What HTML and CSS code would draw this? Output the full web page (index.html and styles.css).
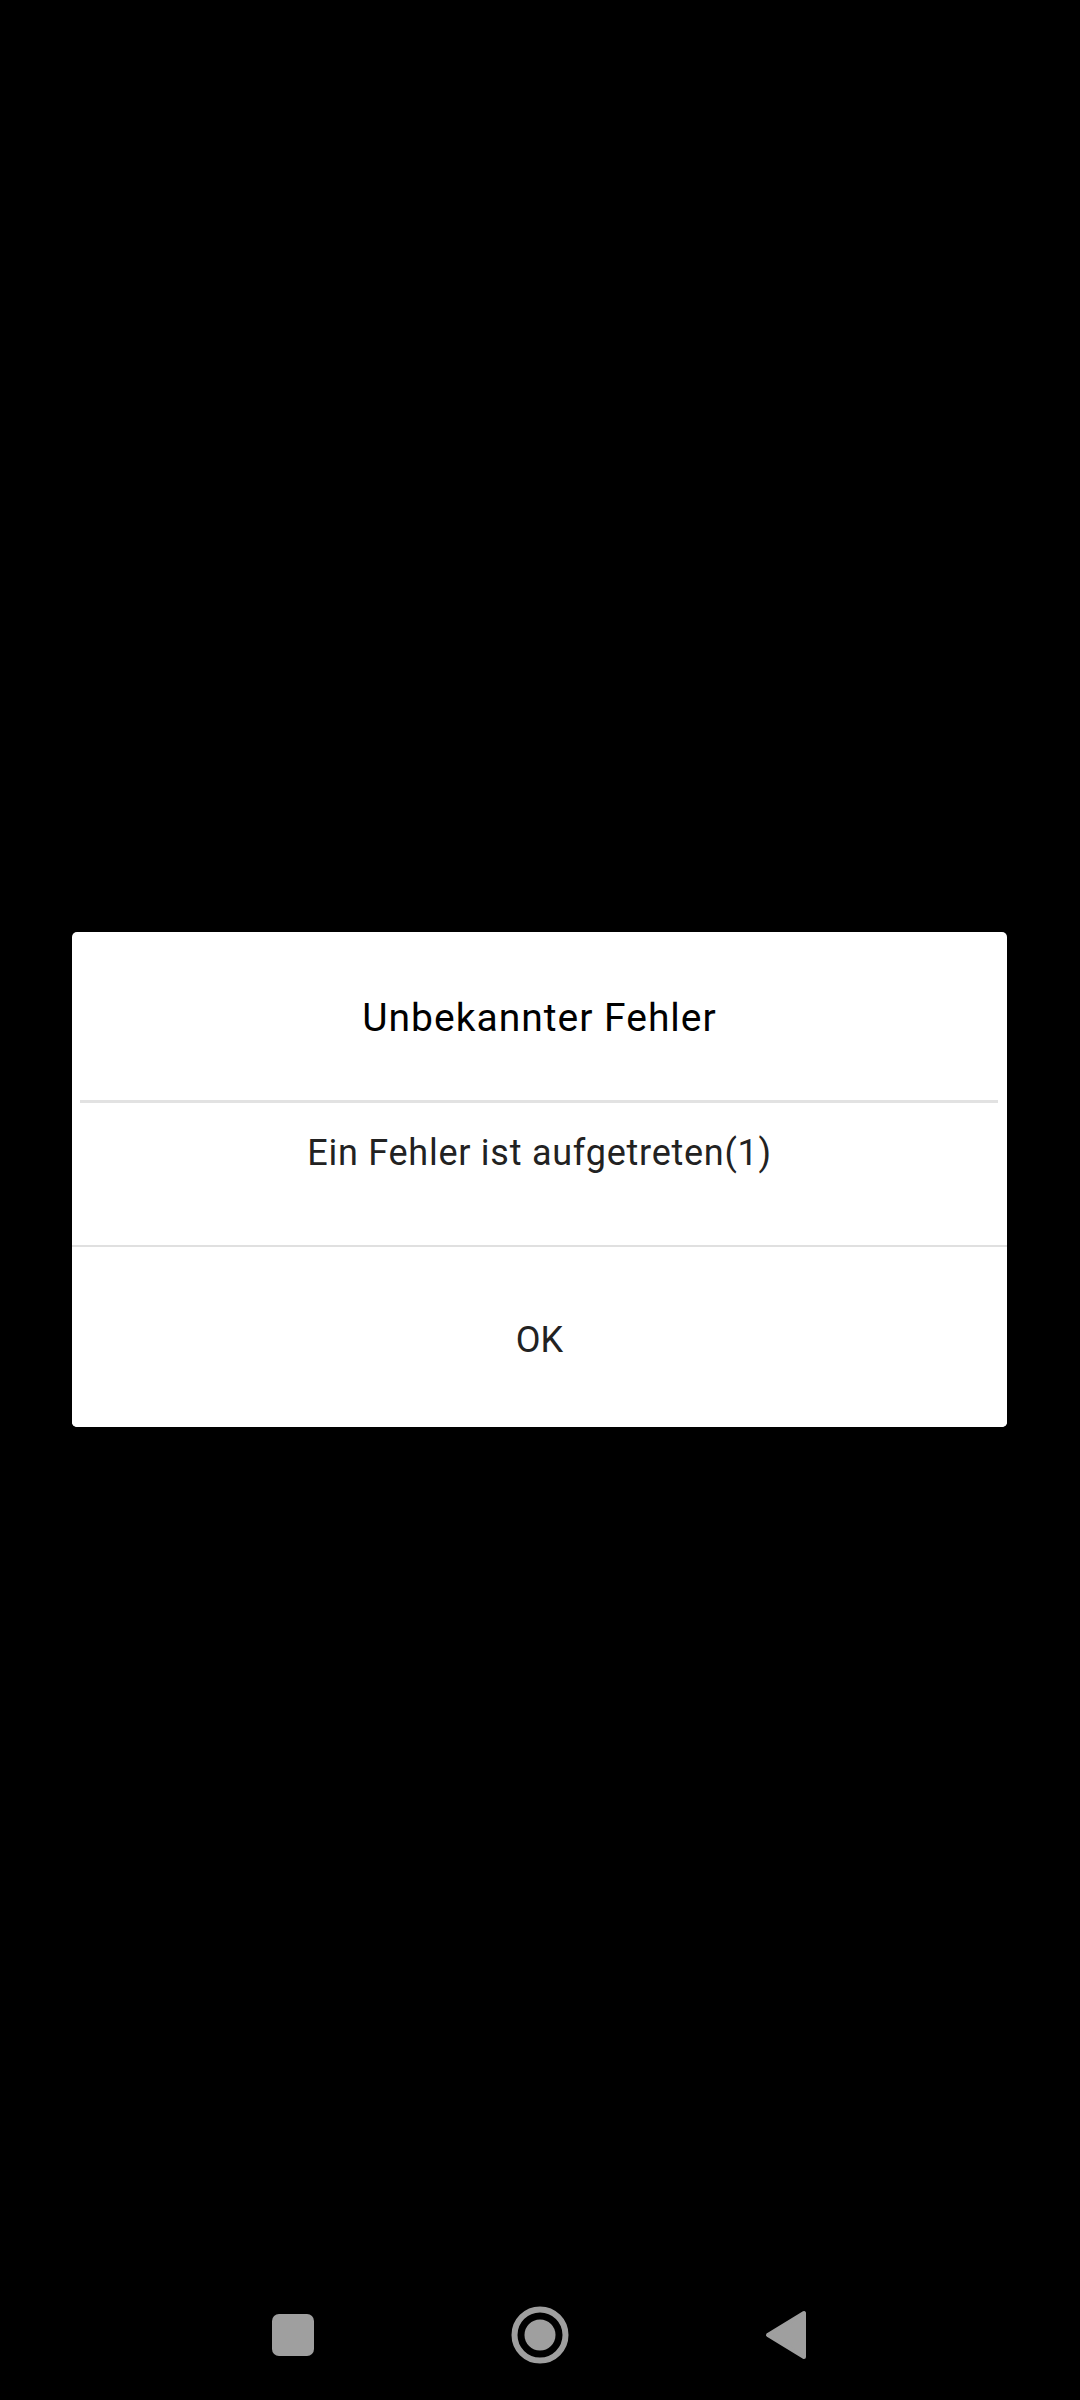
FILE: index.html
```html
<!DOCTYPE html>
<html lang="de">
<head>
<meta charset="utf-8">
<title>Unbekannter Fehler</title>
<link rel="stylesheet" href="styles.css">
</head>
<body>
<div class="screen">
  <main class="stage">
    <div class="dialog" role="alertdialog">
      <div class="dialog-title">Unbekannter Fehler</div>
      <div class="divider-inset"></div>
      <div class="dialog-message">Ein Fehler ist aufgetreten(1)</div>
      <div class="divider-full"></div>
      <button class="dialog-button" type="button">OK</button>
    </div>
  </main>
  <nav class="navbar">
    <div class="nav-slot">
      <svg width="60" height="60" viewBox="0 0 60 60"><rect x="9" y="9" width="42" height="42" rx="7" fill="#9f9f9f"/></svg>
    </div>
    <div class="nav-slot">
      <svg width="60" height="60" viewBox="0 0 60 60"><circle cx="30" cy="30" r="25.5" fill="none" stroke="#9f9f9f" stroke-width="6"/><circle cx="30" cy="30" r="15.5" fill="#9f9f9f"/></svg>
    </div>
    <div class="nav-slot">
      <svg width="60" height="60" viewBox="0 0 60 60"><polygon points="11,30 47,8 47,52" fill="#9f9f9f" stroke="#9f9f9f" stroke-width="4" stroke-linejoin="round"/></svg>
    </div>
  </nav>
</div>
</body>
</html>
```

FILE: styles.css
```css
html, body {
  margin: 0;
  padding: 0;
  background: #000;
}

.screen {
  width: 1080px;
  height: 2400px;
  display: flex;
  flex-direction: column;
  font-family: Roboto, "Noto Sans", "Liberation Sans", sans-serif;
}

.stage {
  flex: 1;
  padding: 932px 73px 0 72px;
}

.dialog {
  background: #fff;
  border-radius: 5px;
  display: flex;
  flex-direction: column;
  overflow: hidden;
}

.dialog-title {
  font-size: 39px;
  line-height: 42px;
  letter-spacing: 1px;
  color: #000;
  text-align: center;
  padding: 65px 0 61px;
}

.divider-inset {
  height: 3px;
  margin: 0 9px 0 8px;
  background: #e2e2e2;
}

.dialog-message {
  font-size: 36px;
  line-height: 42px;
  letter-spacing: 0.75px;
  color: #222;
  text-align: center;
  padding: 29px 0 71px;
}

.divider-full {
  height: 2px;
  background: #e0e0e0;
}

.dialog-button {
  border: 0;
  background: #fff;
  font-family: inherit;
  font-size: 36px;
  line-height: 42px;
  color: #222;
  padding: 72px 0 66px;
  margin: 0;
  text-align: center;
}

.navbar {
  height: 130px;
  display: flex;
  justify-content: center;
  align-items: center;
  gap: 147px;
}

.nav-slot {
  width: 100px;
  height: 100px;
  display: flex;
  align-items: center;
  justify-content: center;
}
```
